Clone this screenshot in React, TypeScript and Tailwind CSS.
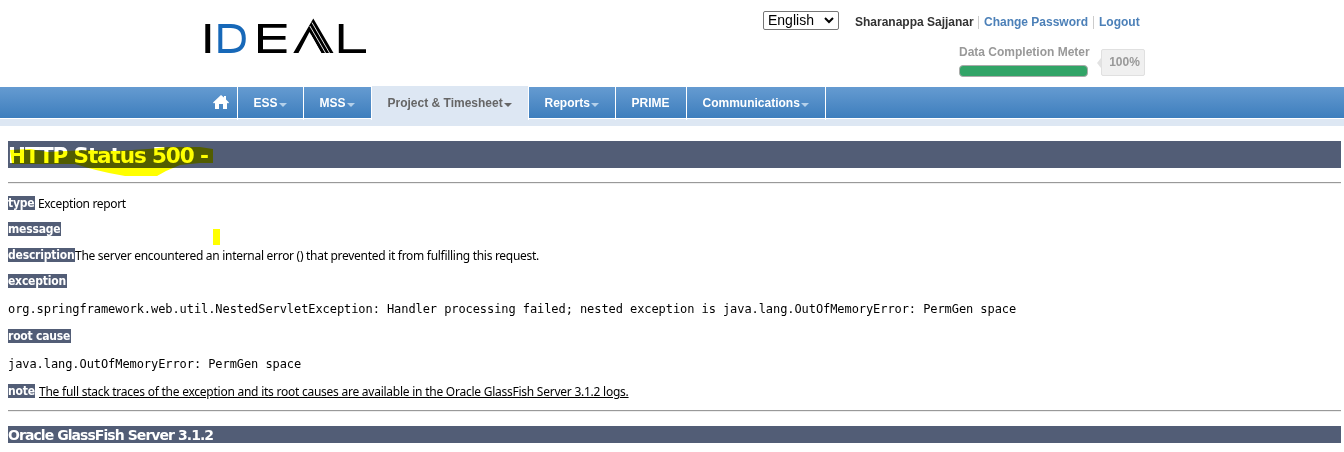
import type { ReactNode } from "react";

function Logo() {
  return (
    <svg className="block" width="162" height="38" viewBox="0 0 162 38" role="img" aria-label="IDEAL">
      <path d="M0.300 6h4.900v29H0.300z" fill="#000" />
      <path d="M15.300 8h10.500c8.500 0 13 4 13 12.500S34.300 33 25.800 33H15.300z" fill="none" stroke="#1768b8" strokeWidth="4" />
      <path d="M81.500 6v3.700H58v8.300H80.500v3.700H58v9.600H81.500V35H53V6z" fill="#000" />
      <path d="M108.300 0.500L128.500 35H116.300L104.500 14L93.500 35H88.300z" fill="#000" />
      <path d="M93.700 35L105.800 16.500L116.300 35z" fill="#fff" />
      <path d="M107 4.500L124.800 35.500M104.800 8L120.800 35.500" stroke="#fff" strokeWidth="0.900" />
      <path d="M133.800 6h4.700v25.300H161V35H133.800z" fill="#000" />
    </svg>
  );
}

function Header() {
  return (
    <header className="flex h-[86px] shrink-0 pl-[205px] font-['Liberation_Sans',Arial,sans-serif]">
      <div className="w-[558px] pt-[18px]"><Logo /></div>
      <div className="w-[382px] pt-[11px]">
        <div className="flex h-[19px] items-center whitespace-nowrap text-[12px] font-bold">
          <div className="flex h-[19px] w-[76px] shrink-0 items-center justify-between rounded-[2px] border border-[#767676] pl-1 pr-1 text-[14px] font-normal text-black">
            <span>English</span>
            <svg width="10" height="7" viewBox="0 0 10 7"><path d="M1 1l4 4 4-4" fill="none" stroke="#000" strokeWidth="2" /></svg>
          </div>
          <span className="ml-4 mt-[3px] w-[118px] text-[#333]">Sharanappa Sajjanar</span>
          <span className="ml-[5px] mt-[3px] h-[13px] w-px bg-[#ccc]" />
          <a className="ml-[5px] mt-[3px] w-[104px] text-[#4c80b8]">Change Password</a>
          <span className="ml-[5px] mt-[3px] h-[13px] w-px bg-[#ccc]" />
          <a className="ml-[5px] mt-[3px] text-[#4c80b8]">Logout</a>
        </div>
        <div className="flex pl-[196px] pt-[15px]">
          <div className="w-[129px] whitespace-nowrap text-[12px] font-bold leading-[14px] text-[#999]">
            Data Completion Meter
            <div className="mt-[6px] h-3 rounded-[4px] border border-[#aaa] bg-[#32a467]" />
          </div>
          <div className="ml-[9px] mt-1 flex h-[27px] items-center">
            <svg width="4" height="10" viewBox="0 0 4 10"><path d="M4 0L0 5l4 5z" fill="#e2e2e2" /></svg>
            <div className="flex h-[27px] w-[44px] items-center justify-center rounded-[2px] border border-[#e0e0e0] bg-[#f0f0f0] pb-[2px] pl-[3px] text-[12px] font-bold text-[#999]">100%</div>
          </div>
        </div>
      </div>
    </header>
  );
}

function Caret({ color }: { color: string }) {
  return (
    <svg className="ml-px mt-[3px]" width="8" height="4" viewBox="0 0 8 4"><path d="M0 0h8L4 4z" fill={color} /></svg>
  );
}

function Tab({ width, label, caret = true }: { width: string; label: string; caret?: boolean }) {
  return (
    <div className={`${width} mt-px flex h-[33px] items-center border-r border-white pb-px pl-[15.5px] text-white`}>
      <span>{label}</span>
      {caret && <Caret color="#b4d0ea" />}
    </div>
  );
}

function Nav() {
  return (
    <nav className="relative h-10 shrink-0 font-['Liberation_Sans',Arial,sans-serif] text-[12px] font-bold">
      <div className="absolute inset-0 flex flex-col">
        <div className="mt-px h-[31px] bg-linear-to-b from-[#659bd1] to-[#3d7ebd]" />
        <div className="h-px bg-white" />
        <div className="h-[7px] bg-[#dde7f3]" />
      </div>
      <div className="relative flex pl-[205px]">
        <div className="mt-px flex h-[33px] w-[33px] border-r border-white pl-[8px] pt-[8px]">
          <svg width="16" height="14" viewBox="0 0 16 14"><path d="M8 0l3 2.500V1h2v3.500l3 3-1 1-1-.7V14H10V9H6v5H2V7.800l-1 .7-1-1z" fill="#fff" /></svg>
        </div>
        <Tab width="w-[66px]" label="ESS" />
        <Tab width="w-[68px]" label="MSS" />
        <div className="flex h-[34px] w-[157px] items-center border-r border-white bg-[#dde7f3] pl-[15.5px] text-[#666]">
          Project &amp; Timesheet<Caret color="#666" />
        </div>
        <Tab width="w-[87px]" label="Reports" />
        <Tab width="w-[71px]" label="PRIME" caret={false} />
        <Tab width="w-[139px]" label="Communications" />
      </div>
    </nav>
  );
}

function Badge({ children, width }: { children: ReactNode; width: string }) {
  return <b className={`${width} inline-block h-[14px] whitespace-nowrap bg-[#525d76] font-['DejaVu_Sans_Condensed','DejaVu_Sans',sans-serif] text-[12px] leading-[15px] tracking-[-0.2px] text-white [font-stretch:condensed]`}>{children}</b>;
}

function Rule() {
  return <div className="h-[2px] border-b border-[#eee] border-t border-t-[#999]" />;
}

export default function App() {
  return (
    <div className="flex h-[452px] w-[1344px] flex-col overflow-hidden bg-white">
      <Header />
      <Nav />
      <main className="relative flex flex-col pl-2 pr-[3px] pt-[15px] font-['Noto_Sans',sans-serif] text-[12px] leading-[16px] text-black">
        <h1 className="h-[27px] whitespace-nowrap bg-[#525d76] font-['DejaVu_Sans',sans-serif] text-[21.5px] font-bold leading-[29px] text-white"><span className="tracking-[-1.1px]">HTTP Status 500 -</span></h1>
        <svg className="absolute left-2 top-[20px] mix-blend-multiply" width="208" height="31" viewBox="0 0 208 31">
          <path d="M2 4L22 3L40 6L58 5L80 4L108 5L140 3L160 1L192 1L205 3V17H192L172 19L158 25L149 30H117L101 27L88 24L77 21L67 18H4z" fill="#ff0" />
        </svg>
        <div className="mt-[14px]"><Rule /></div>
        <div className="mt-3 flex h-[14px] whitespace-nowrap"><Badge width="w-[27px]">type</Badge><span className="ml-[3px] tracking-[-0.35px]">Exception report</span></div>
        <div className="mt-3 flex h-[14px]"><Badge width="w-[53px]">message</Badge></div>
        <div className="absolute left-[213px] top-[103px] h-4 w-[7px] bg-[#ff0]" />
        <div className="mt-3 flex h-[14px] whitespace-nowrap"><Badge width="w-[67px]">description</Badge><span className="tracking-[-0.29px]">The server encountered an internal error () that prevented it from fulfilling this request.</span></div>
        <div className="mt-3 flex h-[14px]"><Badge width="w-[59px]">exception</Badge></div>
        <pre className="mt-[14px] h-[15px] font-['DejaVu_Sans_Mono',monospace] text-[12px] leading-[15px] tracking-[-0.075px]">org.springframework.web.util.NestedServletException: Handler processing failed; nested exception is java.lang.OutOfMemoryError: PermGen space</pre>
        <div className="mt-3 flex h-[14px]"><Badge width="w-[63px]">root cause</Badge></div>
        <pre className="mt-[14px] h-[15px] font-['DejaVu_Sans_Mono',monospace] text-[12px] leading-[15px] tracking-[-0.075px]">java.lang.OutOfMemoryError: PermGen space</pre>
        <div className="mt-3 flex h-[14px] whitespace-nowrap"><Badge width="w-[27px]">note</Badge><u className="ml-1 tracking-[-0.245px]">The full stack traces of the exception and its root causes are available in the Oracle GlassFish Server 3.1.2 logs.</u></div>
        <div className="mt-3"><Rule /></div>
        <h3 className="mt-[14px] h-[17px] whitespace-nowrap bg-[#525d76] font-['DejaVu_Sans',sans-serif] text-[14px] font-bold leading-[18px] text-white"><span className="tracking-[-0.94px]">Oracle GlassFish Server 3.1.2</span></h3>
      </main>
    </div>
  );
}
